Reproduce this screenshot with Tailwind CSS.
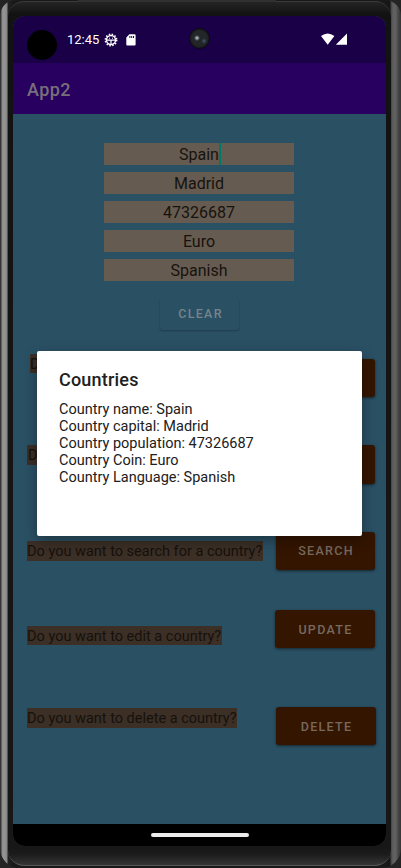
<!DOCTYPE html>
<html lang="en">
<head>
<meta charset="utf-8">
<title>App2</title>
<script src="https://cdn.jsdelivr.net/npm/@tailwindcss/browser@4"></script>
</head>
<body class="h-[868px] w-[401px] overflow-hidden bg-[#242424] font-['Roboto',sans-serif]">
<!-- Phone body -->
<div class="relative h-[868px] w-[401px] overflow-hidden rounded-t-[16px] rounded-b-[20px] bg-[linear-gradient(90deg,#303030_0px,#3c3c3c_1px,#8a8a8a_2px,#969696_4px,#868686_7px,#222_8px,#191919_13px,#191919_386px,#151515_390px,#444_391px,#606060_393px,#606060_396px,#484848_398px,#353535_401px)]">
  <div class="absolute top-[1px] left-[8px] h-[865px] w-[383px] rounded-[16px] border-t border-b border-t-[#3a3a3a] border-b-[#555] bg-[linear-gradient(180deg,#242424_0px,#121212_12px,#171717_845px,#1b1b1b_852px,#3a3a3a_865px)]"></div>
  <div class="absolute top-0 left-[78px] h-[2px] w-[198px] bg-[#303030]"></div>

  <!-- Screen -->
  <main class="relative mt-[16px] ml-[13px] flex h-[830px] w-[373px] flex-col overflow-hidden rounded-[12px] bg-[#2a5064]">
    <header class="relative flex h-[47px] shrink-0 items-center bg-[#190047] pl-[14px] text-white">
      <span class="mt-[11px] size-[30px] rounded-full bg-black"></span>
      <span class="ml-[10px] w-[34px] text-[13px] leading-[16px] whitespace-nowrap">12:45</span>
      <svg class="ml-[3px] size-[14px]" viewBox="0 0 14 14" fill="none" stroke="#fff">
        <circle cx="7" cy="7" r="4.5" stroke-width="1.4"/>
        <circle cx="7" cy="7" r="5.7" stroke-width="1.5" stroke-dasharray="1.5 1.484"/>
        <path d="M3 7.2h8M7 7v4" stroke-width="1.2"/>
        <path d="M5 5.2h1M8 5.2h1" stroke-width="1"/>
      </svg>
      <svg class="ml-[8px] h-[12px] w-[10px]" viewBox="0 0 10 12"><path fill="#fff" fill-rule="evenodd" d="M3.4.3H8.6a1 1 0 0 1 1 1V10.500a1 1 0 0 1-1 1H1.300a1 1 0 0 1-1-1V3.500ZM3.400 2v2h1V2ZM5.200 2v2h1V2ZM7 2v2h1V2Z"/></svg>
      <span class="absolute top-[12px] left-[176px] size-[21px] rounded-full border border-[#0c0b12] bg-[radial-gradient(circle_at_7px_9px,#e0e6ea_0px,#8a9196_1px,transparent_3px),radial-gradient(circle_at_14px_12px,#53637c_0px,#34404f_1px,transparent_3px),radial-gradient(circle,#202427_0px,#24272a_7px,#171819_10px)]"></span>
      <svg class="absolute top-[17px] left-[308px] h-[12px] w-[27px]" viewBox="0 0 27 12" fill="#fff"><path d="M0 3Q6.700-2.200 13.400 3L6.700 11.700ZM26 .4V11.800H14.800Z"/></svg>
    </header>
    <div class="flex h-[51px] shrink-0 items-center bg-[#28005f] pt-px pl-[14px] text-[18px] font-medium tracking-[0.4px] text-[#777079]">App2</div>

    <section class="relative h-[710px] shrink-0 bg-[#2a5064] pt-[29px]">
      <div class="ml-[91px] flex w-[190px] flex-col gap-[7px] text-center text-[16px] leading-[23px] text-[#16130f]">
        <div class="flex h-[22px] justify-center bg-[#665b50]"><span class="-mr-[2px] h-[22px] border-r-2 border-[#00796b]">Spain</span></div>
        <div class="h-[22px] bg-[#665b50]">Madrid</div>
        <div class="h-[22px] bg-[#665b50]">47326687</div>
        <div class="h-[22px] bg-[#665b50]">Euro</div>
        <div class="h-[22px] bg-[#665b50]">Spanish</div>
      </div>
      <button class="mt-[17px] ml-[147px] block h-[32px] w-[79px] rounded-[3px] bg-[#2a5064] pt-px pl-[2px] text-[12.500px] font-medium tracking-[1.300px] text-[#75838a] shadow-[0_1px_2px_#0004]">CLEAR</button>

      <div class="mt-[24px] flex h-[86px] items-start text-[14.500px] leading-[21px] text-[#17110c]">
        <span class="ml-[17px] h-[19px] w-[220px] bg-[#3b2f26]">D</span>
        <button aria-label="Add" class="mt-[5px] ml-auto mr-[11px] h-[38px] w-[100px] rounded-[3px] bg-[#331500] shadow-[0_1px_3px_#0008]"></button>
      </div>
      <div class="mt-[5px] flex h-[87px] items-start text-[14.500px] leading-[22px] text-[#17110c]">
        <span class="ml-[14px] h-[20px] w-[220px] bg-[#3b2f26] pl-px">D</span>
        <button aria-label="List" class="ml-auto mr-[11px] h-[39px] w-[100px] rounded-[3px] bg-[#331500] shadow-[0_1px_3px_#0008]"></button>
      </div>
      <div class="flex h-[78px] items-start text-[14.500px] leading-[22px] text-[#17110c]">
        <span class="mt-[9px] ml-[14px] h-[20px] w-[236px] bg-[#3b2f26] whitespace-nowrap">Do you want to search for a country?</span>
        <button class="ml-auto mr-[11px] h-[38px] w-[99px] rounded-[3px] bg-[#331500] pl-px text-[12.500px] font-medium tracking-[1.300px] text-[#77695f] shadow-[0_1px_3px_#0008]">SEARCH</button>
      </div>
      <div class="flex h-[97px] items-start text-[14.500px] leading-[22px] text-[#17110c]">
        <span class="mt-[16px] ml-[14px] h-[19px] w-[195px] bg-[#3b2f26] whitespace-nowrap">Do you want to edit a country?</span>
        <button class="ml-auto mr-[11px] h-[38px] w-[100px] rounded-[3px] bg-[#331500] pt-px pl-px text-[12.500px] font-medium tracking-[1.300px] text-[#77695f] shadow-[0_1px_3px_#0008]">UPDATE</button>
      </div>
      <div class="flex items-start text-[14.500px] leading-[22px] text-[#17110c]">
        <span class="mt-[1px] ml-[14px] h-[20px] w-[210px] bg-[#3b2f26] whitespace-nowrap">Do you want to delete a country?</span>
        <button class="ml-auto mr-[10px] h-[38px] w-[100px] rounded-[3px] bg-[#331500] pt-px pl-px text-[12.500px] font-medium tracking-[1.300px] text-[#77695f] shadow-[0_1px_3px_#0008]">DELETE</button>
      </div>

      <!-- Dialog -->
      <div role="dialog" class="absolute top-[237px] left-[24px] h-[185px] w-[325px] rounded-[2px] bg-white pt-[17px] pl-[22px] text-[#202020] shadow-[0_5px_14px_#0005]">
        <h1 class="text-[18px] leading-[24px] font-medium tracking-[0.2px]">Countries</h1>
        <div class="mt-[9px] text-[14.500px] leading-[17px]">
          <p>Country name: Spain</p>
          <p>Country capital: Madrid</p>
          <p>Country population: 47326687</p>
          <p>Country Coin: Euro</p>
          <p>Country Language: Spanish</p>
        </div>
      </div>
    </section>

    <footer class="flex h-[22px] shrink-0 justify-center bg-black pt-[9px]"><span class="h-[4px] w-[98px] rounded-full bg-[#ebebeb]"></span></footer>
  </main>
</div>
</body>
</html>
